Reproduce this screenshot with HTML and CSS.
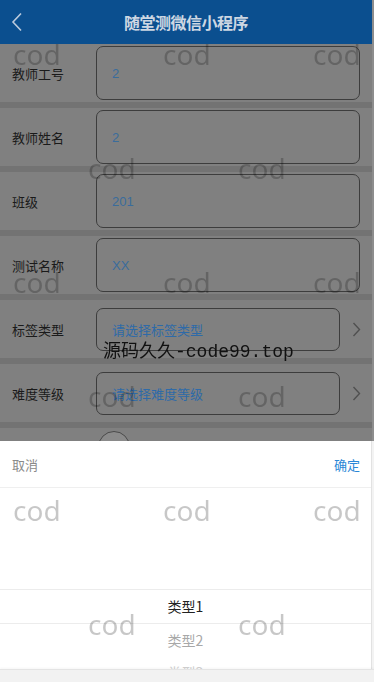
FILE: index.html
```html
<!DOCTYPE html>
<html lang="zh-CN">
<head>
<meta charset="utf-8">
<title>随堂测微信小程序</title>
<link rel="stylesheet" href="styles.css">
</head>
<body>
<div class="page">
  <header class="nav">
    <svg class="nav-back" width="12" height="20" viewBox="0 0 12 20"><polyline points="10,1.5 2,10 10,18.5" fill="none" stroke="#bccbdd" stroke-width="1.6"/></svg>
    <h1 class="nav-title">随堂测微信小程序</h1>
    <span></span>
  </header>
  <div class="form">
    <div class="row"><span class="label">教师工号</span><div class="field">2</div></div>
    <div class="row"><span class="label">教师姓名</span><div class="field">2</div></div>
    <div class="row"><span class="label">班级</span><div class="field">201</div></div>
    <div class="row"><span class="label">测试名称</span><div class="field">XX</div></div>
    <div class="row"><span class="label">标签类型</span><div class="field field-select">请选择标签类型</div><svg class="chev" width="9" height="15" viewBox="0 0 9 15"><polyline points="1.5,1 7.5,7.5 1.5,14" fill="none" stroke="#505050" stroke-width="1.4"/></svg></div>
    <div class="row"><span class="label">难度等级</span><div class="field field-select">请选择难度等级</div><svg class="chev" width="9" height="15" viewBox="0 0 9 15"><polyline points="1.5,1 7.5,7.5 1.5,14" fill="none" stroke="#505050" stroke-width="1.4"/></svg></div>
    <div class="row row-last"><span class="label"></span><span class="radio"></span></div>
  </div>
</div>

<div class="sheet">
  <div class="panel">
    <div class="sheet-head"><span class="cancel">取消</span><span class="ok">确定</span></div>
    <div class="picker">
      <div class="indicator"></div>
      <ul class="options">
        <li class="opt opt-on">类型1</li>
        <li class="opt opt-2">类型2</li>
        <li class="opt opt-3">类型3</li>
      </ul>
    </div>
  </div>
</div>
<div class="bottom-bar"></div>

<div class="watermark">
  <div class="wm-row wm-odd"><span>cod</span><span>cod</span><span>cod</span></div>
  <div class="wm-row wm-even"><span>cod</span><span>cod</span></div>
  <div class="wm-row wm-odd"><span>cod</span><span>cod</span><span>cod</span></div>
  <div class="wm-row wm-even"><span>cod</span><span>cod</span></div>
  <div class="wm-row wm-odd"><span>cod</span><span>cod</span><span>cod</span></div>
  <div class="wm-row wm-even"><span>cod</span><span>cod</span></div>
</div>
<div class="wm-text">源码久久-code99.top</div>
</body>
</html>
```
FILE: styles.css
```css
html, body {
  margin: 0;
  padding: 0;
}
body {
  width: 374px;
  height: 682px;
  overflow: hidden;
  background: #8d8d8d;
  font-family: "Liberation Sans", "Noto Sans CJK SC", sans-serif;
}
.page {
  width: 372px;
}
.nav {
  height: 44px;
  background: #0b4f8f;
  display: grid;
  grid-template-columns: 40px 1fr 40px;
  align-items: center;
}
.nav-back {
  margin-left: 11px;
}
.nav-title {
  margin: 0;
  text-align: center;
  font-size: 16px;
  font-weight: bold;
  color: #cdd7e3;
  font-family: "Noto Sans CJK SC", sans-serif;
  letter-spacing: -0.5px;
}
.form {
  background: #808080;
}
.row {
  display: flex;
  align-items: center;
  height: 58px;
  border-bottom: 6px solid #737373;
  background: #808080;
}
.label {
  width: 84px;
  padding-left: 12px;
  font-size: 13px;
  color: #1a1a1a;
  font-family: "Noto Sans CJK SC", sans-serif;
}
.field {
  box-sizing: border-box;
  width: 264px;
  height: 54px;
  border: 1px solid #3d3d3d;
  border-radius: 7px;
  padding-left: 15px;
  display: flex;
  align-items: center;
  font-size: 13px;
  color: #3a6c9c;
}
.field-select {
  width: 244px;
  height: 43px;
  color: #2e6aa8;
  font-family: "Noto Sans CJK SC", sans-serif;
}
.chev {
  margin-left: 12px;
}
.row-last {
  align-items: flex-start;
  border-bottom: 0;
  height: 260px;
}
.radio {
  box-sizing: border-box;
  margin-top: 3px;
  margin-left: 2px;
  width: 32px;
  height: 32px;
  border-radius: 50%;
  border: 1.5px solid #4a4a4a;
  background: #8a8a8a;
}
.sheet {
  position: fixed;
  left: 0;
  top: 441px;
  bottom: 0;
  width: 374px;
  background: #f3f3f3;
  overflow: hidden;
}
.panel {
  width: 371px;
  height: 100%;
  background: #fff;
  border-right: 1px solid #e2e2e2;
}
.sheet-head {
  height: 46px;
  border-bottom: 1px solid #efefef;
  display: flex;
  align-items: center;
  justify-content: space-between;
  padding: 0 11px 0 12px;
  font-size: 13px;
  font-family: "Noto Sans CJK SC", sans-serif;
}
.cancel {
  color: #8a8a8a;
}
.ok {
  color: #2a87d6;
}
.picker {
  position: relative;
  height: 238px;
}
.indicator {
  position: absolute;
  left: 0;
  right: 0;
  top: 101px;
  height: 33px;
  border-top: 1px solid #ececec;
  border-bottom: 1px solid #ececec;
}
.options {
  list-style: none;
  margin: 0;
  padding: 101px 0 0;
}
.opt {
  height: 34px;
  line-height: 34px;
  text-align: center;
  font-size: 14px;
  font-family: "Noto Sans CJK SC", sans-serif;
}
.opt-on {
  color: #222;
}
.opt-2 {
  color: #a8a8a8;
}
.opt-3 {
  height: 30px;
  line-height: 30px;
  color: #d0d0d0;
}
.bottom-bar {
  position: fixed;
  left: 0;
  bottom: 0;
  width: 374px;
  height: 12px;
  background: #f2f2f2;
  border-top: 1px solid #e4e4e4;
  box-shadow: 0 -1px 2px rgba(0, 0, 0, 0.04);
}
.watermark {
  position: fixed;
  left: 0;
  top: 0;
  width: 374px;
  height: 682px;
  overflow: hidden;
  pointer-events: none;
  z-index: 10;
  font-family: "Noto Sans", sans-serif;
  font-size: 28px;
  color: rgba(0, 0, 0, 0.22);
}
.wm-row {
  display: flex;
  gap: 100px;
  height: 114px;
  line-height: 114px;
}
.wm-row:first-child {
  margin-top: -3px;
}
.wm-row span {
  width: 50px;
  flex: none;
}
.wm-odd {
  padding-left: 13px;
}
.wm-even {
  padding-left: 88px;
}
.wm-text {
  position: fixed;
  left: 103px;
  top: 340px;
  z-index: 11;
  font-family: "Liberation Mono", "Noto Sans CJK SC", monospace;
  font-size: 18px;
  line-height: 24px;
  color: #111;
  pointer-events: none;
}
```
